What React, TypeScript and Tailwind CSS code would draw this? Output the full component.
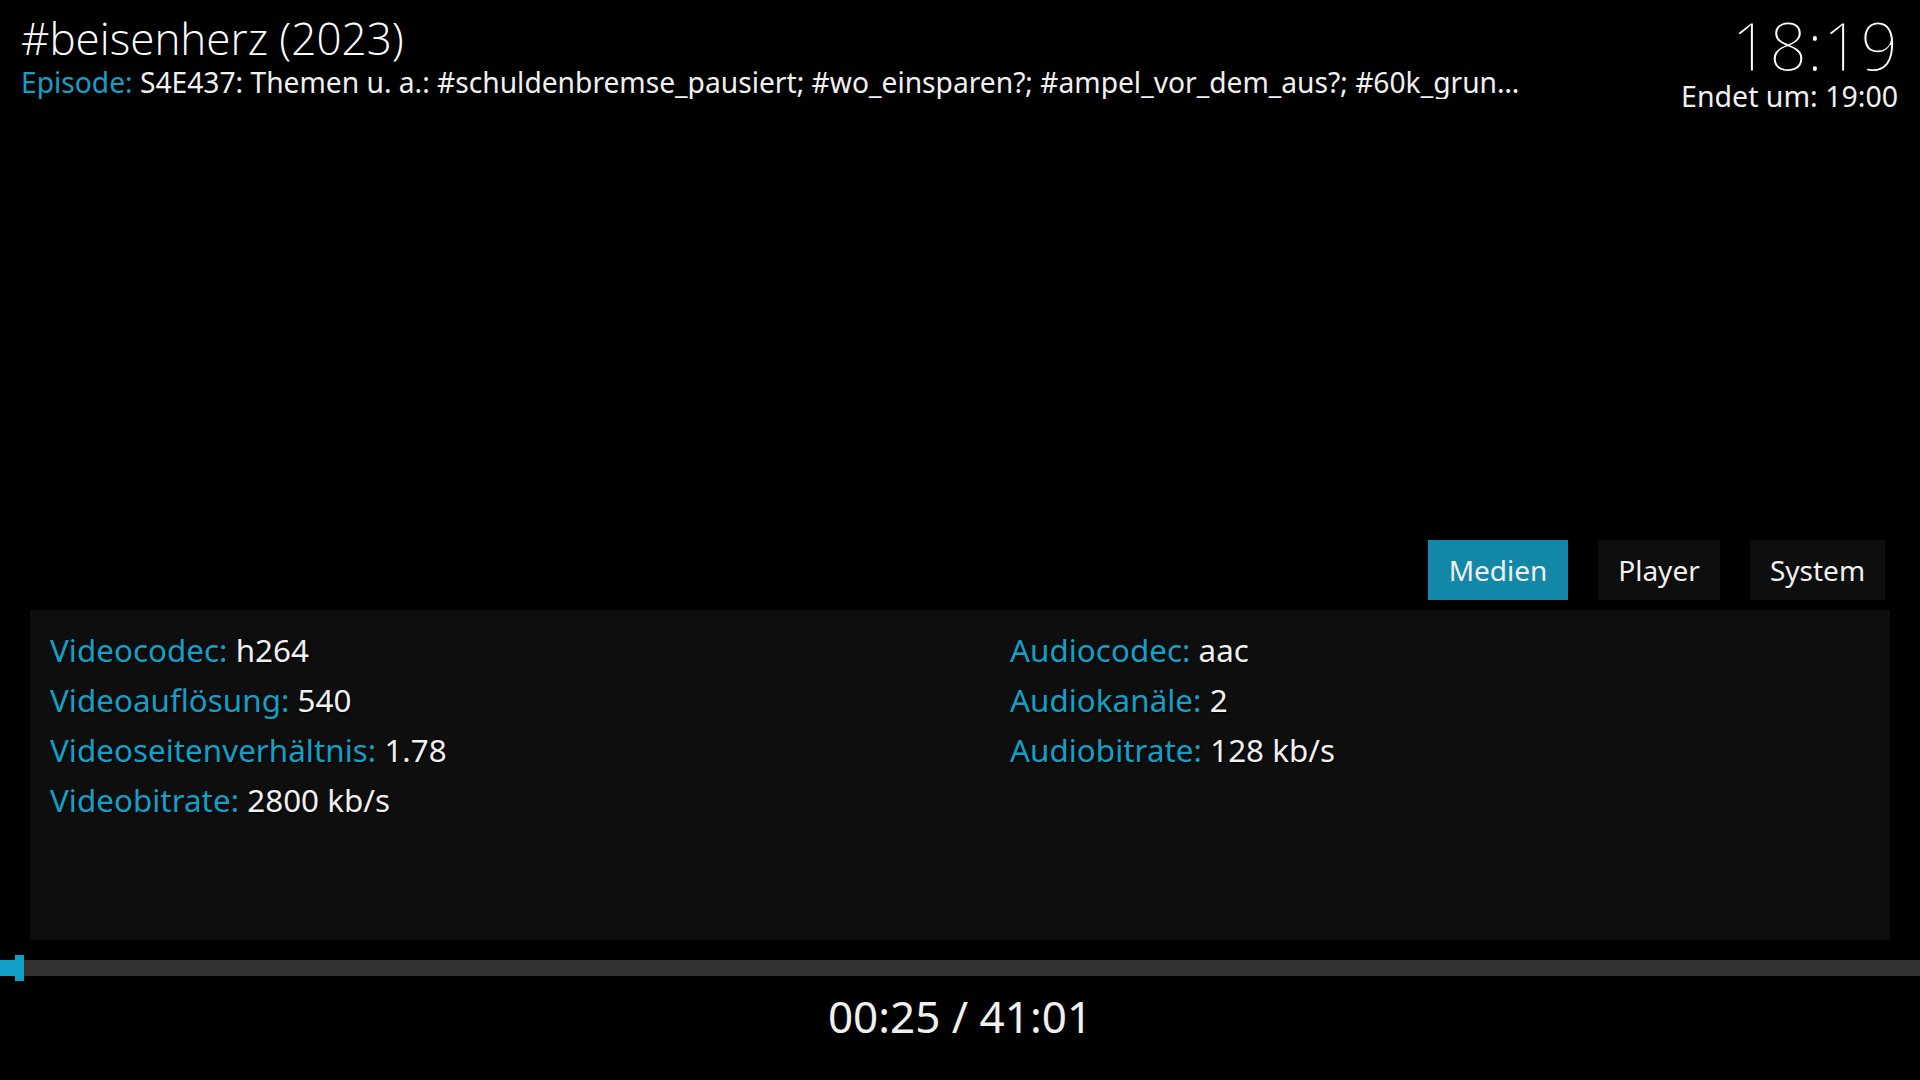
import React from "react";

const font = { fontFamily: '"Noto Sans", "Open Sans", sans-serif' };
const light = { fontFamily: '"Open Sans", "Noto Sans", sans-serif' };

function Row({ label, value }: { label: string; value: string }) {
  return (
    <div className="h-[50px] leading-[50px] text-[31.4px] whitespace-nowrap [text-shadow:1px_1px_2px_#000]">
      <span className="text-[#12a0c7]">{label}</span>{" "}
      <span className="text-[#f0f0f0]">{value}</span>
    </div>
  );
}

export default function App() {
  return (
    <div
      className="w-[1920px] h-[1080px] bg-black flex flex-col overflow-hidden text-white"
      style={font}
    >
      {/* Header */}
      <div className="flex justify-between items-start">
        <div className="pl-[21px] pt-[11px] min-w-0">
          <div className="text-[44px] leading-[54px] font-light text-white" style={light}>
            #beisenherz (2023)
          </div>
          <div className="text-[28.2px] leading-[34px] whitespace-nowrap w-[1500px] overflow-hidden text-ellipsis">
            <span className="text-[#12a0c7]">Episode:</span>{" "}
            <span className="text-[#f0f0f0]">
              S4E437: Themen u. a.: #schuldenbremse_pausiert; #wo_einsparen?; #ampel_vor_dem_aus?; #60k_grundeinkommen
            </span>
          </div>
        </div>
        <div className="pr-[22px] pt-[10px] flex flex-col items-end">
          <div
            className="text-[66px] leading-[70px] font-light text-white [-webkit-text-stroke:1.2px_#000]"
            style={light}
          >
            18:19
          </div>
          <div className="text-[28.5px] leading-[32px] text-[#f0f0f0]">Endet um: 19:00</div>
        </div>
      </div>

      <div className="flex-1" />

      {/* Tabs */}
      <div className="flex justify-end gap-[30px] pr-[35px]">
        <div className="h-[60px] w-[140px] bg-[#1287a8] flex items-center justify-center text-[28px] text-[#f0f0f0]">
          Medien
        </div>
        <div className="h-[60px] w-[122px] bg-[#0e0e0e] flex items-center justify-center text-[28px] text-[#f0f0f0]">
          Player
        </div>
        <div className="h-[60px] w-[135px] bg-[#0e0e0e] flex items-center justify-center text-[28px] text-[#f0f0f0]">
          System
        </div>
      </div>

      {/* Info panel */}
      <div className="mt-[10px] mx-[30px] h-[330px] bg-[#0e0e0e] pt-[15px] pl-[20px] grid grid-cols-[960px_1fr]">
        <div>
          <Row label="Videocodec:" value="h264" />
          <Row label="Videoauflösung:" value="540" />
          <Row label="Videoseitenverhältnis:" value="1.78" />
          <Row label="Videobitrate:" value="2800 kb/s" />
        </div>
        <div>
          <Row label="Audiocodec:" value="aac" />
          <Row label="Audiokanäle:" value="2" />
          <Row label="Audiobitrate:" value="128 kb/s" />
        </div>
      </div>

      {/* Progress */}
      <div className="mt-[20px] relative h-[16px] bg-[#333333]">
        <div className="absolute left-0 top-0 h-[16px] w-[16px] bg-[#12a0c7]" />
        <div className="absolute left-[15px] top-[-5px] h-[26px] w-[9px] bg-[#12a0c7]" />
      </div>

      {/* Time */}
      <div className="h-[104px] flex justify-center pt-[14px]">
        <div className="text-[44px] leading-[52px] text-[#f0f0f0]">00:25 / 41:01</div>
      </div>
    </div>
  );
}
